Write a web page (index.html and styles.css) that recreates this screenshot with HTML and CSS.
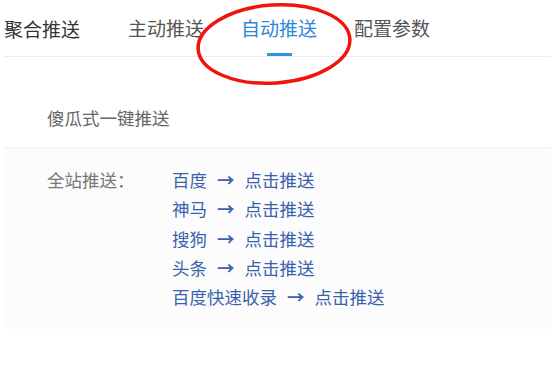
FILE: index.html
```html
<!DOCTYPE html>
<html>
<head>
  <title>自动推送</title>
  <link rel="stylesheet" href="styles.css">
</head>
<body>
  <div class="page">
    <div class="tabs">
      <span class="tabs-title">聚合推送</span>
      <div class="tab-list">
        <span class="tab">主动推送</span>
        <span class="tab active">自动推送</span>
        <span class="tab">配置参数</span>
      </div>
    </div>

    <h3 class="section-title">傻瓜式一键推送</h3>

    <div class="push-box">
      <div class="push-label">全站推送：</div>
      <ul class="push-list">
        <li><a href="#">百度</a><span class="arrow">→</span><a href="#">点击推送</a></li>
        <li><a href="#">神马</a><span class="arrow">→</span><a href="#">点击推送</a></li>
        <li><a href="#">搜狗</a><span class="arrow">→</span><a href="#">点击推送</a></li>
        <li><a href="#">头条</a><span class="arrow">→</span><a href="#">点击推送</a></li>
        <li><a href="#">百度快速收录</a><span class="arrow">→</span><a href="#">点击推送</a></li>
      </ul>
    </div>
  </div>

  <svg class="mark" width="551" height="100" viewBox="0 0 551 100">
    <ellipse cx="274" cy="44" rx="76" ry="39" transform="rotate(-4 274 44)" fill="none" stroke="#f0140f" stroke-width="3.5"/>
  </svg>
</body>
</html>
```

FILE: styles.css
```css
body {
  margin: 0;
  font-family: "Noto Sans CJK SC", "Noto Sans", sans-serif;
  background: #fff;
}

.page {
  padding-left: 4px;
}

.tabs {
  height: 56px;
  display: flex;
  align-items: center;
  border-bottom: 1px solid #ececec;
}

.tabs-title {
  font-size: 19px;
  color: #333;
  margin-right: 48px;
}

.tab-list {
  display: flex;
  gap: 37px;
  height: 100%;
  align-items: center;
}

.tab {
  position: relative;
  font-size: 19px;
  color: #555;
  line-height: 56px;
}

.tab.active {
  color: #2d86d6;
}

.tab.active::after {
  content: "";
  position: absolute;
  left: 50%;
  bottom: 0;
  width: 25px;
  height: 3px;
  margin-left: -12px;
  background: #2f96d4;
}

.section-title {
  margin: 0;
  padding: 48px 0 16px 43px;
  font-size: 17.5px;
  font-weight: normal;
  line-height: 26px;
  color: #666;
}

.push-box {
  display: flex;
  padding: 17px 0 18px 43px;
  border-top: 1px solid #f1f1f1;
  background: #fcfcfc;
  font-size: 17.5px;
  line-height: 29.25px;
}

.push-label {
  width: 125px;
  color: #777;
}

.push-list {
  list-style: none;
  margin: 0;
  padding: 0;
}

.push-list a {
  color: #3a62ab;
  text-decoration: none;
}

.arrow {
  margin: 0 10px;
  color: #3a62ab;
  font-weight: bold;
}

.mark {
  position: absolute;
  left: 0;
  top: 0;
}
```
